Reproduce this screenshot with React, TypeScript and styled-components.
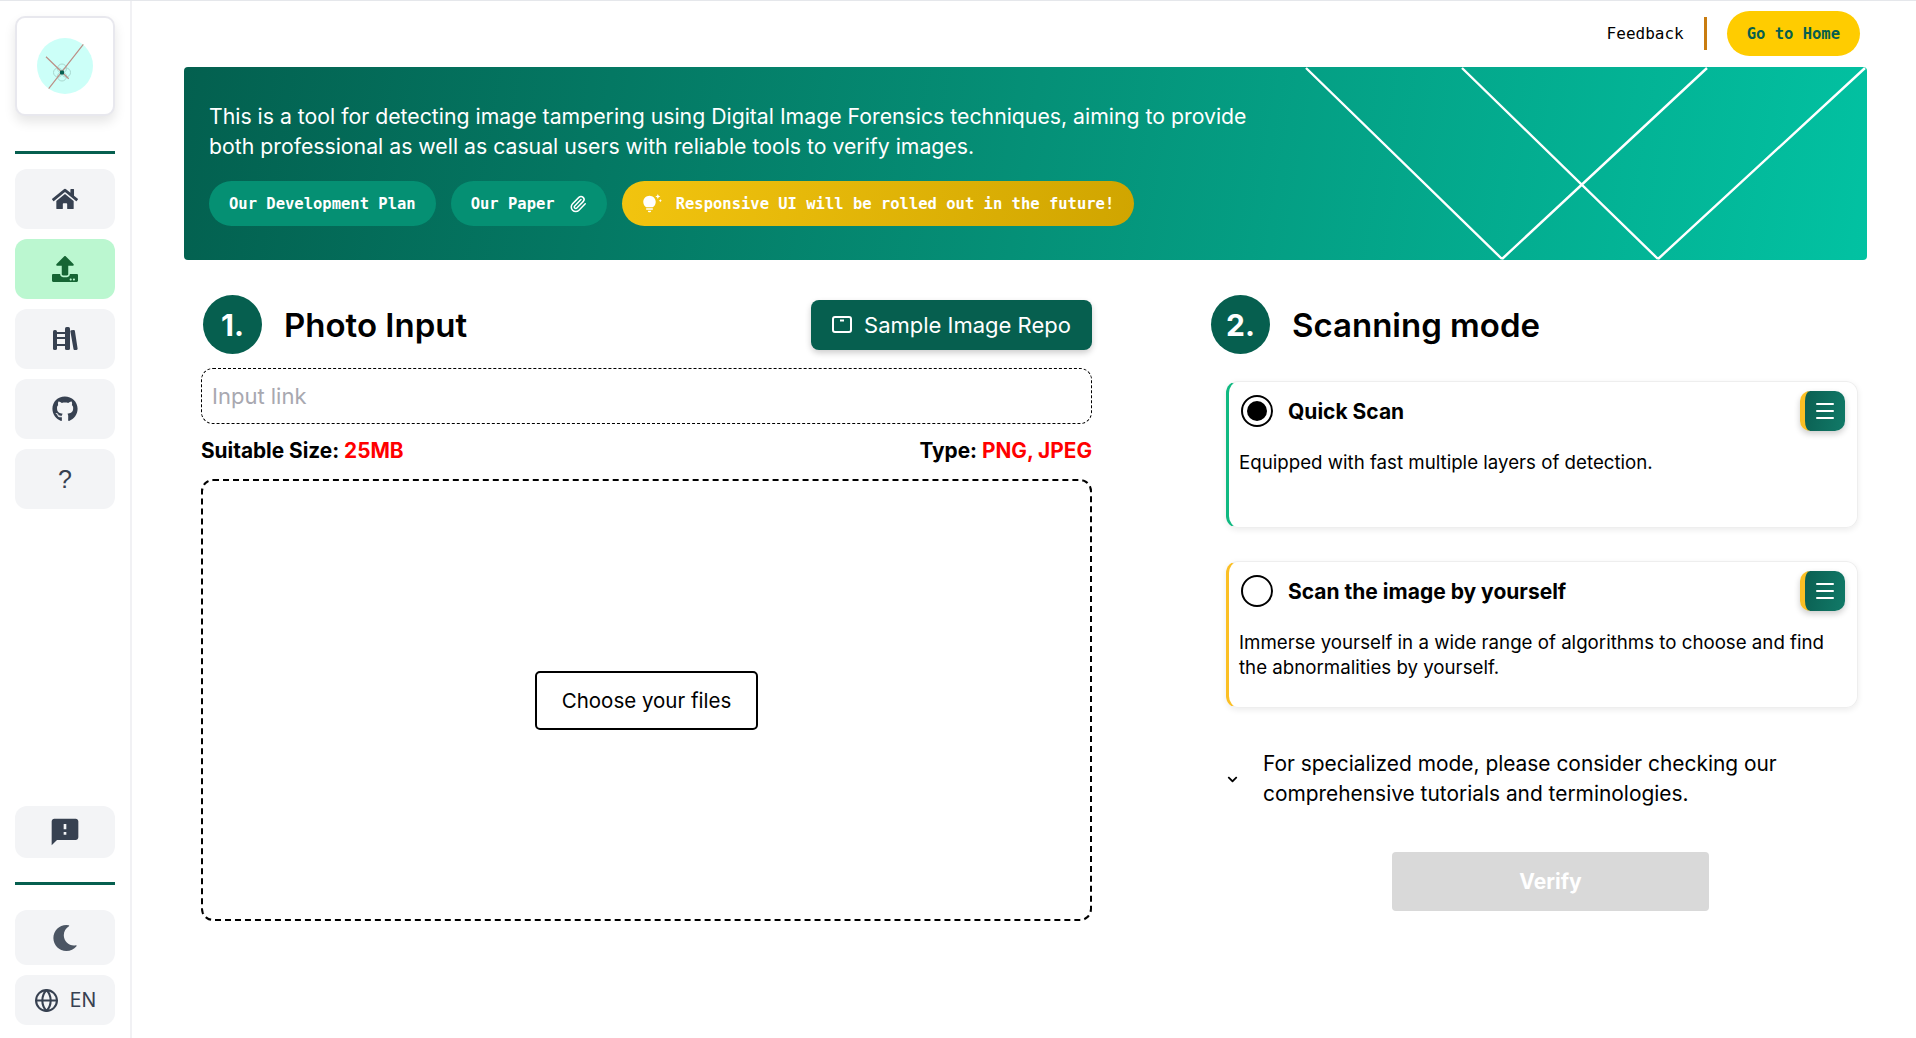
import React from 'react';
import styled, { createGlobalStyle } from 'styled-components';
import { FaHome, FaUpload, FaGithub, FaMoon, FaChevronDown } from 'react-icons/fa';
import { MdFeedback, MdTipsAndUpdates } from 'react-icons/md';
import { Globe, Paperclip, Menu } from 'lucide-react';

const GREEN = '#065f4f';
const BODY = '"Inter", "Open Sans", sans-serif';
const MONO = '"DejaVu Sans Mono", "Liberation Mono", monospace';

const GlobalStyle = createGlobalStyle`
  html, body { margin: 0; padding: 0; background: #fff; }
  * { box-sizing: border-box; }
  body { font-family: ${BODY}; color: #000; }
`;

const Page = styled.div`
  display: flex;
  height: 1038px;
  overflow: hidden;
  border-top: 1px solid #e5e7eb;
`;

const Sidebar = styled.aside`
  width: 132px;
  flex: none;
  display: flex;
  flex-direction: column;
  padding: 15px 15px 3px;
  border-right: 2px solid #f1f1f4;
`;

const LogoCard = styled.div`
  width: 100px;
  height: 100px;
  display: flex;
  align-items: center;
  justify-content: center;
  border: 2px solid #e8e8ee;
  border-radius: 10px;
  background: #fff;
  box-shadow: 0 6px 12px rgba(0, 0, 0, 0.1);
`;

const Rule = styled.div<{ $top: number; $bottom: number; $h: number }>`
  height: ${(p) => p.$h}px;
  margin: ${(p) => p.$top}px 0 ${(p) => p.$bottom}px;
  background: ${GREEN};
`;

const NavButton = styled.div<{ $active?: boolean; $h?: number }>`
  height: ${(p) => p.$h ?? 60}px;
  margin-bottom: 10px;
  flex: none;
  display: flex;
  align-items: center;
  justify-content: center;
  gap: 11px;
  border-radius: 12px;
  background: ${(p) => (p.$active ? '#bbf7d0' : '#f3f4f6')};
  color: ${(p) => (p.$active ? '#166534' : '#374151')};
  font-size: 19.5px;
`;

const QuestionMark = styled.span`
  font: 400 25px "Liberation Sans", sans-serif;
`;

const Spacer = styled.div`
  flex: 1;
`;

const Main = styled.main`
  flex: 1;
  min-width: 0;
  display: flex;
  flex-direction: column;
  padding: 0 49px 0 52px;
`;

const TopBar = styled.header`
  height: 66px;
  display: flex;
  align-items: center;
  justify-content: flex-end;
  padding: 0 7px 1px 0;
`;

const FeedbackLink = styled.span`
  font: 400 16px ${MONO};
`;

const Separator = styled.span`
  width: 3px;
  height: 33px;
  margin: 0 20px;
  background: #c97c10;
`;

const HomeButton = styled.span`
  height: 45px;
  padding: 0 20px;
  display: inline-flex;
  align-items: center;
  border-radius: 23px;
  background: #ffcc00;
  color: ${GREEN};
  font: 700 15.5px ${MONO};
`;

const Banner = styled.section`
  position: relative;
  height: 193px;
  padding: 34px 25px 0;
  border-radius: 4px;
  overflow: hidden;
  color: #fff;
  background: linear-gradient(100deg, #03604f 0%, #059077 50%, #02c2a2 100%);
`;

const BannerLines = styled.svg`
  position: absolute;
  inset: 0;
  width: 100%;
  height: 100%;
`;

const BannerText = styled.p`
  position: relative;
  margin: 0 0 20px;
  font-size: 21.25px;
  line-height: 30px;
`;

const PillRow = styled.div`
  position: relative;
  display: flex;
  gap: 15px;
`;

const Pill = styled.span<{ $accent?: boolean }>`
  height: 45px;
  padding: 0 20px;
  display: inline-flex;
  align-items: center;
  gap: 14px;
  border-radius: 23px;
  font: 700 15.5px ${MONO};
  background: ${(p) => (p.$accent ? 'linear-gradient(100deg, #f2c40f, #d0a500)' : '#059073')};
`;

const Columns = styled.div`
  display: grid;
  grid-template-columns: 891px 1fr;
  column-gap: 117px;
  padding: 35px 0 0 17px;
`;

const Column = styled.div`
  min-width: 0;
`;

const SectionHead = styled.div`
  height: 59px;
  display: flex;
  align-items: center;
  gap: 22px;
  padding-left: 2px;
`;

const StepBadge = styled.span`
  width: 59px;
  height: 59px;
  flex: none;
  display: flex;
  align-items: center;
  justify-content: center;
  border-radius: 50%;
  background: ${GREEN};
  color: #fff;
  font-size: 30px;
  font-weight: 700;
`;

const SectionTitle = styled.h2`
  flex: 1;
  margin: 0;
  font-size: 33px;
  font-weight: 600;
`;

const RepoButton = styled.span`
  width: 281px;
  height: 50px;
  display: flex;
  align-items: center;
  justify-content: center;
  gap: 12px;
  border-radius: 8px;
  background: ${GREEN};
  color: #fff;
  font-size: 22px;
  box-shadow: 0 3px 6px rgba(0, 0, 0, 0.2);
`;

const LinkInput = styled.input`
  display: block;
  width: 100%;
  height: 56px;
  margin-top: 14px;
  padding: 0 10px;
  border: 1px dashed #000;
  border-radius: 12px;
  font: 400 22px ${BODY};
  outline: none;
  &::placeholder { color: #a8a8b0; }
`;

const InfoRow = styled.div`
  height: 55px;
  padding-bottom: 2px;
  display: flex;
  align-items: center;
  justify-content: space-between;
  font-size: 20.8px;
  font-weight: 700;
`;

const Red = styled.span`
  color: #ff0000;
`;

const DropZone = styled.div`
  height: 442px;
  display: flex;
  align-items: center;
  justify-content: center;
  border: 2px dashed #000;
  border-radius: 12px;
`;

const ChooseButton = styled.span`
  width: 223px;
  height: 59px;
  display: flex;
  align-items: center;
  justify-content: center;
  border: 2px solid #000;
  border-radius: 5px;
  font-size: 20.5px;
`;

const Cards = styled.div`
  display: flex;
  flex-direction: column;
  gap: 33px;
  margin: 27px 0 0 17px;
  width: 632px;
`;

const ModeCard = styled.div<{ $color: string }>`
  height: 147px;
  padding: 9px 12px 0 10px;
  border: 1px solid #eeeeee;
  border-left: 3px solid ${(p) => p.$color};
  border-radius: 12px;
  box-shadow: 0 2px 6px rgba(0, 0, 0, 0.08);
`;

const CardHead = styled.div`
  height: 40px;
  display: flex;
  align-items: center;
  gap: 15px;
`;

const Radio = styled.span<{ $checked?: boolean }>`
  width: 32px;
  height: 32px;
  flex: none;
  margin-left: 2px;
  border: 2px solid #000;
  border-radius: 50%;
  padding: 4px;
  display: flex;
  &::after {
    content: '';
    flex: 1;
    border-radius: 50%;
    background: ${(p) => (p.$checked ? '#000' : 'transparent')};
  }
`;

const CardTitle = styled.span`
  flex: 1;
  font-size: 21px;
  font-weight: 700;
`;

const MenuButton = styled.span`
  width: 45px;
  height: 40px;
  display: flex;
  align-items: center;
  justify-content: center;
  border-left: 5px solid #fbbf24;
  border-radius: 10px;
  background: linear-gradient(100deg, #0b5f52, #117a68);
  color: #fff;
  box-shadow: 0 3px 6px rgba(0, 0, 0, 0.2);
`;

const CardText = styled.p`
  margin: 19px 0 0;
  font-size: 18.7px;
  line-height: 25px;
`;

const Accordion = styled.div`
  display: flex;
  align-items: center;
  gap: 25px;
  margin: 41px 0 0 18px;
  font-size: 20.9px;
  line-height: 30px;
`;

const VerifyRow = styled.div`
  display: flex;
  justify-content: center;
  margin: 43px 0 0 0;
  padding-left: 25px;
`;

const VerifyButton = styled.span`
  width: 317px;
  height: 59px;
  display: flex;
  align-items: center;
  justify-content: center;
  border-radius: 4px;
  background: #d9d9d9;
  color: #fff;
  font-size: 21px;
  font-weight: 700;
`;

const Logo = () => (
  <svg width="96" height="96" viewBox="17 18 96 96">
    <circle cx="65" cy="66" r="28" fill="#ccfff8" />
    <g fill="none" stroke="#a9d8cf" strokeWidth="1">
      <circle cx="62" cy="68.5" r="4.5" />
      <circle cx="58" cy="72.5" r="4.5" />
      <circle cx="66" cy="72.5" r="4.5" />
      <circle cx="62" cy="76.5" r="4.5" />
    </g>
    <path d="M83.3 44.3 L48.7 88.7 M46 56.7 L68.7 78.7" stroke="#bc8f86" strokeWidth="1.2" fill="none" />
    <rect x="60" y="70.5" width="4" height="4" rx="1" fill={GREEN} />
  </svg>
);

const BooksIcon = () => (
  <svg width="25" height="24" viewBox="0 0 25 24" fill="currentColor">
    <rect x="0" y="3" width="4" height="20" rx="1.6" />
    <rect x="4" y="5" width="8" height="2" />
    <rect x="4" y="10" width="8" height="2" />
    <rect x="4" y="17" width="8" height="2" />
    <rect x="12" y="0" width="5" height="23" rx="1.6" />
    <path d="M18.2 3.2 L20.6 3 C21.3 3 21.8 3.4 21.9 4 L24.6 21.4 C24.7 22.2 24.3 22.8 23.5 22.9 L21.8 23 C21.1 23 20.6 22.7 20.5 22 L17.4 4.6 C17.3 3.8 17.5 3.3 18.2 3.2 Z" />
  </svg>
);

const RepoIcon = () => (
  <svg width="20" height="17" viewBox="0 0 20 17" fill="none" stroke="currentColor" strokeWidth="2">
    <rect x="1" y="1" width="18" height="15" rx="2" />
    <path d="M8 4.5 H12" />
  </svg>
);

export default function App() {
  return (
    <>
      <GlobalStyle />
      <Page>
        <Sidebar>
          <LogoCard>
            <Logo />
          </LogoCard>
          <Rule $top={35} $bottom={15} $h={3} />
          <NavButton><FaHome size={26} /></NavButton>
          <NavButton $active><FaUpload size={26} /></NavButton>
          <NavButton><BooksIcon /></NavButton>
          <NavButton><FaGithub size={26} /></NavButton>
          <NavButton><QuestionMark>?</QuestionMark></NavButton>
          <Spacer />
          <NavButton $h={52}><MdFeedback size={32} /></NavButton>
          <Rule $top={14} $bottom={25} $h={3} />
          <NavButton $h={55}><FaMoon size={26} color="#4b5563" /></NavButton>
          <NavButton $h={50}><Globe size={25} />EN</NavButton>
        </Sidebar>
        <Main>
          <TopBar>
            <FeedbackLink>Feedback</FeedbackLink>
            <Separator />
            <HomeButton>Go to Home</HomeButton>
          </TopBar>
          <Banner>
            <BannerLines viewBox="0 0 1683 193" preserveAspectRatio="none">
              <path
                d="M1122 1 L1318 192 M1278 1 L1474 192 M1523 1 L1318 192 M1681 1 L1474 192"
                stroke="#fff"
                strokeWidth="2.4"
                fill="none"
              />
            </BannerLines>
            <BannerText>
              This is a tool for detecting image tampering using Digital Image Forensics techniques, aiming to provide
              <br />
              both professional as well as casual users with reliable tools to verify images.
            </BannerText>
            <PillRow>
              <Pill>Our Development Plan</Pill>
              <Pill>Our Paper <Paperclip size={18} /></Pill>
              <Pill $accent><MdTipsAndUpdates size={20} />Responsive UI will be rolled out in the future!</Pill>
            </PillRow>
          </Banner>
          <Columns>
            <Column>
              <SectionHead>
                <StepBadge>1.</StepBadge>
                <SectionTitle>Photo Input</SectionTitle>
                <RepoButton><RepoIcon />Sample Image Repo</RepoButton>
              </SectionHead>
              <LinkInput placeholder="Input link" />
              <InfoRow>
                <span>Suitable Size: <Red>25MB</Red></span>
                <span>Type: <Red>PNG, JPEG</Red></span>
              </InfoRow>
              <DropZone>
                <ChooseButton>Choose your files</ChooseButton>
              </DropZone>
            </Column>
            <Column>
              <SectionHead>
                <StepBadge>2.</StepBadge>
                <SectionTitle>Scanning mode</SectionTitle>
              </SectionHead>
              <Cards>
                <ModeCard $color="#10b981">
                  <CardHead>
                    <Radio $checked />
                    <CardTitle>Quick Scan</CardTitle>
                    <MenuButton><Menu size={24} /></MenuButton>
                  </CardHead>
                  <CardText>Equipped with fast multiple layers of detection.</CardText>
                </ModeCard>
                <ModeCard $color="#fbbf24">
                  <CardHead>
                    <Radio />
                    <CardTitle>Scan the image by yourself</CardTitle>
                    <MenuButton><Menu size={24} /></MenuButton>
                  </CardHead>
                  <CardText>
                    Immerse yourself in a wide range of algorithms to choose and find
                    <br />
                    the abnormalities by yourself.
                  </CardText>
                </ModeCard>
              </Cards>
              <Accordion>
                <FaChevronDown size={11} />
                <span>
                  For specialized mode, please consider checking our
                  <br />
                  comprehensive tutorials and terminologies.
                </span>
              </Accordion>
              <VerifyRow>
                <VerifyButton>Verify</VerifyButton>
              </VerifyRow>
            </Column>
          </Columns>
        </Main>
      </Page>
    </>
  );
}
